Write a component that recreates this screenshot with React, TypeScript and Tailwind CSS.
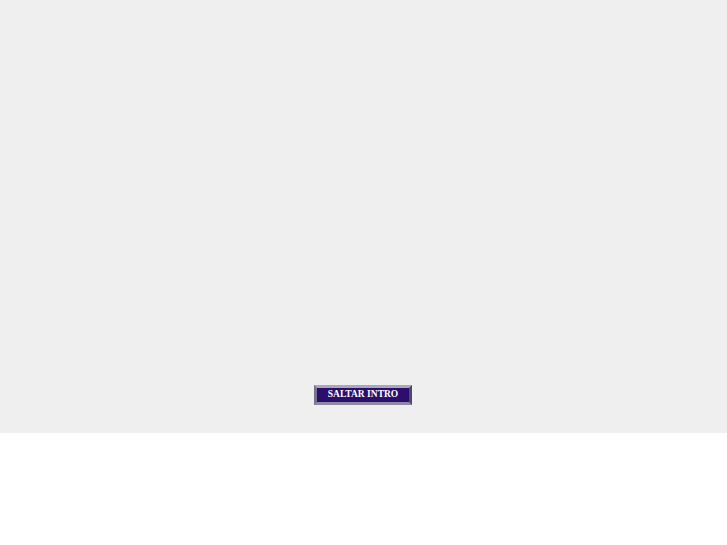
export default function App() {
  return (
    <div className="min-h-screen bg-white">
      {/* Intro stage */}
      <div className="flex h-[433px] w-full items-end justify-center bg-[#efefef] pb-[28px] pr-px">
        <button
          className="flex h-[20px] w-[98px] items-center justify-center border-[3px] border-t-[#aaa5c0] border-l-[#77738d] border-r-[#4f4b66] border-b-[#8e8aa3] bg-[#2c0e6c]"
          style={{ fontFamily: '"Liberation Serif", "Times New Roman", serif' }}
        >
          <span className="text-[9.5px] font-bold leading-none text-white">SALTAR INTRO</span>
        </button>
      </div>
    </div>
  )
}
